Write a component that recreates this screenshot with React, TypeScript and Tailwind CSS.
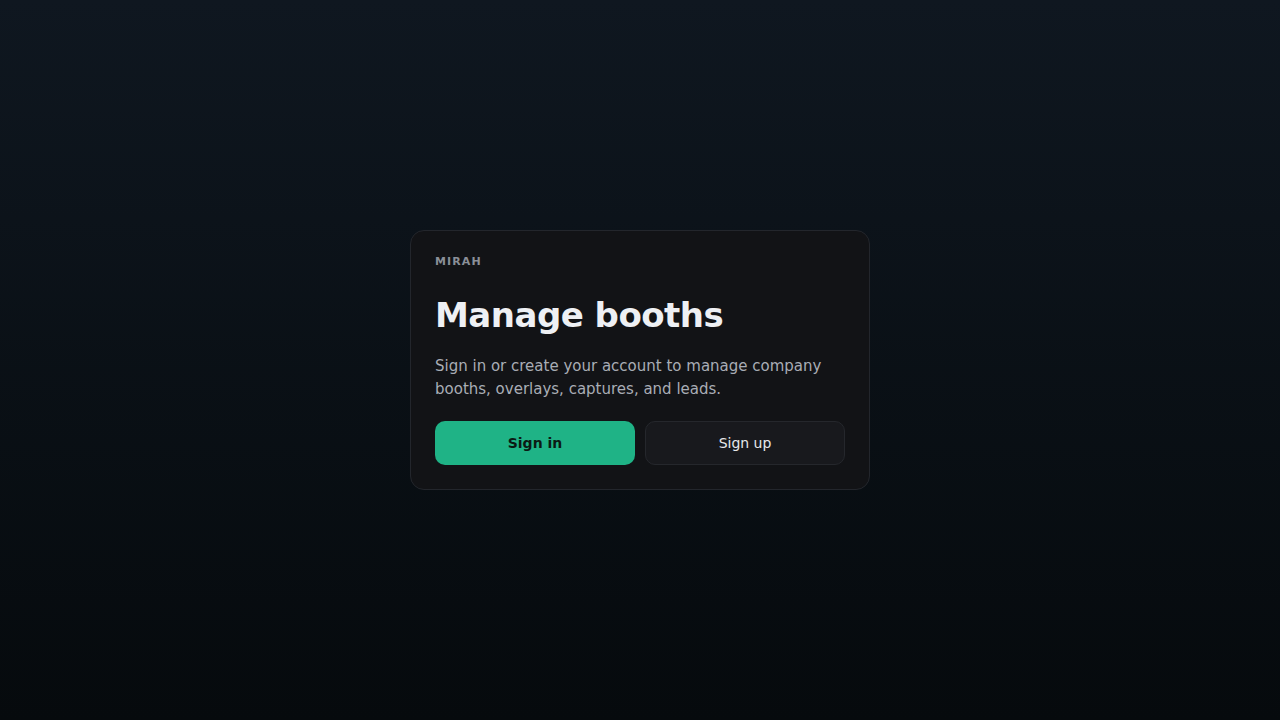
export default function App() {
  return (
    <div
      className="min-h-screen w-full flex items-center justify-center bg-gradient-to-b from-[#0f1720] to-[#060a0d]"
      style={{ fontFamily: '"DejaVu Sans", sans-serif' }}
    >
      {/* Card */}
      <div className="w-[460px] rounded-[14px] border border-[#23262c] bg-[#121316] p-6 flex flex-col">
        <p className="text-[11px] leading-[14px] font-bold tracking-[0.1em] text-[#8a8f98]">MIRAH</p>
        <h1 className="mt-[26px] text-[34px] leading-10 font-bold tracking-[-0.015em] text-[#eef0f4]">
          Manage booths
        </h1>
        <p className="mt-5 text-[15px] leading-[23px] text-[#a9adb5]">
          Sign in or create your account to manage company booths, overlays, captures, and leads.
        </p>
        <div className="mt-5 grid grid-cols-2 gap-2.5">
          <button className="h-11 rounded-[10px] bg-[#1fb386] text-sm font-bold text-[#0b1a14]">
            Sign in
          </button>
          <button className="h-11 rounded-[10px] border border-[#25272c] bg-[#18191d] text-sm text-[#e6e7ea]">
            Sign up
          </button>
        </div>
      </div>
    </div>
  );
}
